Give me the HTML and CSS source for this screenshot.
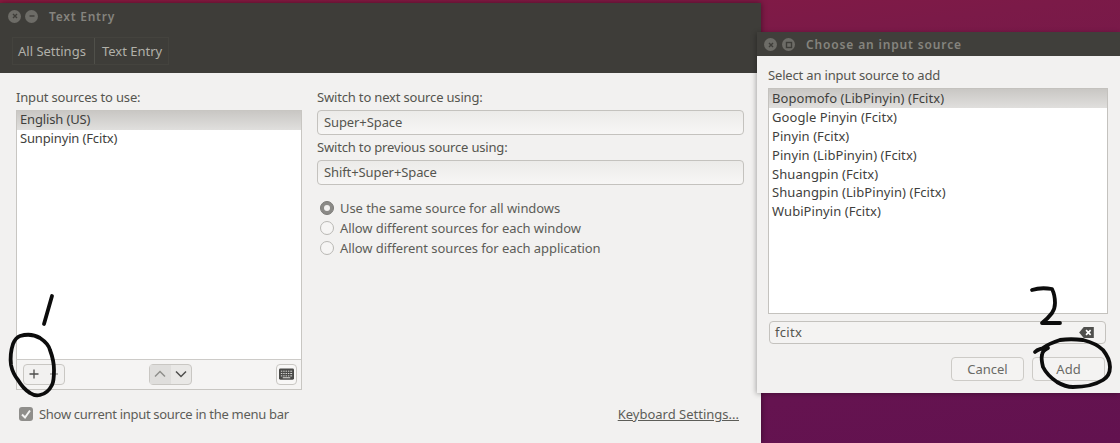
FILE: index.html
```html
<!DOCTYPE html>
<html lang="en">
<head>
<meta charset="utf-8">
<title>Text Entry</title>
<link rel="stylesheet" href="styles.css">
</head>
<body>
<div class="desktop">
  <section class="window main-window">
    <header class="titlebar">
      <span class="win-btn"><svg viewBox="0 0 12 12" class="win-glyph"><path d="M4 4l4 4M8 4l-4 4"/></svg></span>
      <span class="win-btn"><svg viewBox="0 0 12 12" class="win-glyph"><path d="M3.500 6h5"/></svg></span>
      <span class="title">Text Entry</span>
    </header>
    <nav class="toolbar">
      <div class="crumbs">
        <span class="crumb">All Settings</span>
        <span class="crumb">Text Entry</span>
      </div>
    </nav>
    <div class="content">
      <div class="columns">
        <div class="left-col">
          <div class="label">Input sources to use:</div>
          <div class="source-box">
            <ul class="list source-list">
              <li class="row selected">English (US)</li>
              <li class="row">Sunpinyin (Fcitx)</li>
            </ul>
            <div class="list-tools">
              <div class="btn-group add-group">
                <span class="tool-btn"><svg viewBox="0 0 12 12" class="tool-icon dark"><path d="M6 1.500v9M1.500 6h9"/></svg></span>
                <span class="tool-btn"><svg viewBox="0 0 12 12" class="tool-icon"><path d="M2 6h8"/></svg></span>
              </div>
              <div class="btn-group move-group">
                <span class="tool-btn muted"><svg viewBox="0 0 14 12" class="tool-icon wide"><path d="M2 8.500l5-5 5 5"/></svg></span>
                <span class="tool-btn"><svg viewBox="0 0 14 12" class="tool-icon wide dark"><path d="M2 3.500l5 5 5-5"/></svg></span>
              </div>
              <span class="kbd-btn">
                <svg viewBox="0 0 16 12" class="kbd-icon"><rect width="16" height="12" rx="1.500" fill="#4a4a48"/><path class="kbd-keys" d="M2 3h1.500M4.500 3H6M7 3h1.500M9.500 3H11M12 3h2M2 5.500h1.500M4.500 5.500H6M7 5.500h1.500M9.500 5.500H11M12 5.500h2M2 8h1.500M4.500 8H6M7 8h1.500M9.500 8H11M12 8h2M4 10h8"/></svg>
              </span>
            </div>
          </div>
        </div>
        <div class="right-col">
          <div class="label">Switch to next source using:</div>
          <div class="entry">Super+Space</div>
          <div class="label second-label">Switch to previous source using:</div>
          <div class="entry">Shift+Super+Space</div>
          <div class="radios">
            <label class="radio-row"><span class="radio checked"></span>Use the same source for all windows</label>
            <label class="radio-row"><span class="radio"></span>Allow different sources for each window</label>
            <label class="radio-row"><span class="radio"></span>Allow different sources for each application</label>
          </div>
        </div>
      </div>
      <div class="footer">
        <label class="check-row">
          <span class="checkbox"><svg viewBox="0 0 14 14" class="check-glyph"><path d="M3 7.500l3 3 5-7"/></svg></span>
          Show current input source in the menu bar
        </label>
        <span class="link">Keyboard Settings...</span>
      </div>
    </div>
  </section>

  <section class="window dialog">
    <header class="titlebar dialog-title">
      <span class="win-btn"><svg viewBox="0 0 12 12" class="win-glyph"><path d="M4 4l4 4M8 4l-4 4"/></svg></span>
      <span class="win-btn"><svg viewBox="0 0 12 12" class="win-glyph"><rect x="3.500" y="3.500" width="5" height="5" fill="none"/></svg></span>
      <span class="title bold">Choose an input source</span>
    </header>
    <div class="dialog-body">
      <div class="label">Select an input source to add</div>
      <ul class="list dialog-list">
        <li class="row selected">Bopomofo (LibPinyin) (Fcitx)</li>
        <li class="row">Google Pinyin (Fcitx)</li>
        <li class="row">Pinyin (Fcitx)</li>
        <li class="row">Pinyin (LibPinyin) (Fcitx)</li>
        <li class="row">Shuangpin (Fcitx)</li>
        <li class="row">Shuangpin (LibPinyin) (Fcitx)</li>
        <li class="row">WubiPinyin (Fcitx)</li>
      </ul>
      <div class="entry search">
        <span>fcitx</span>
        <svg viewBox="0 0 16 12" class="clear-icon"><path d="M5 0h11v12H5L0 6z" fill="#4f4f4d"/><path d="M7.500 3.500l5 5M12.500 3.500l-5 5" stroke="#fff" stroke-width="1.800"/></svg>
      </div>
      <div class="actions">
        <span class="button">Cancel</span>
        <span class="button">Add</span>
      </div>
    </div>
  </section>

  <svg class="ink" viewBox="0 0 1120 443">
    <path d="M52 296L44 324"/>
    <path d="M13 344C15 339 17 337 20 336C27 334 35 335 40 338C46 342 49 346 50 350C53 358 54 364 54 370C54 376 54 381 52 385C49 391 45 394 40 395C36 396 33 395 30 393C25 390 21 385 18 380C14 375 12 370 11 365C10 357 11 350 13 344"/>
    <path d="M1032 290C1038 288 1046 288 1052 289C1054 293 1055 298 1055 303C1055 307 1054 310 1052 313C1049 317 1046 320 1042 323C1048 323 1054 323 1060 323"/>
    <path d="M1035 352C1038 349 1043 348 1048 348C1044 350 1042 352 1042 355C1041 359 1042 363 1043 367C1046 373 1051 378 1057 382C1062 385 1067 387 1073 387C1085 387 1095 385 1103 380C1108 377 1110 372 1110 367C1110 361 1107 355 1103 350C1098 345 1091 342 1083 340C1075 339 1067 339 1060 340C1054 342 1048 344 1043 348"/>
  </svg>
</div>
</body>
</html>
```
FILE: styles.css
```css
* { box-sizing: border-box; }
html, body { margin: 0; padding: 0; }
body {
  width: 1120px;
  height: 443px;
  overflow: hidden;
  font-family: "Noto Sans", "Open Sans", sans-serif;
  font-size: 13px;
  color: #4c4c4a;
}
.desktop {
  position: relative;
  width: 1120px;
  height: 443px;
  overflow: hidden;
  background: linear-gradient(172deg, #8c1a41 0%, #7b1a48 25%, #651350 85%, #62124f 100%);
}
.window { position: absolute; display: flex; flex-direction: column; }
.main-window {
  left: 0; top: 3px; width: 761px; height: 440px;
  background: #f2f1f0;
  box-shadow: 0 0 6px rgba(0,0,0,.45);
}
.dialog {
  left: 757px; top: 32px; width: 363px; height: 361px;
  background: #f2f1f0;
  box-shadow: -1px 1px 5px rgba(0,0,0,.3);
}
.titlebar {
  height: 25px;
  background: #3e3d39;
  display: flex;
  align-items: center;
  padding: 1px 0 0 8px;
  gap: 4px;
  flex: none;
}
.dialog-title { height: 24px; padding-left: 7px; background: #403f3b; gap: 5px; }
.win-btn {
  width: 13px; height: 13px; border-radius: 50%;
  background: #6d6c67;
  display: flex; align-items: center; justify-content: center;
}
.win-glyph { width: 12px; height: 12px; fill: none; stroke: #3e3d39; stroke-width: 1.400; }
.title {
  margin-left: 7px;
  color: #85847e;
  font-size: 12px;
  font-weight: 600;
  letter-spacing: .75px;
}
.title.bold { margin-left: 6px; letter-spacing: .85px; }
.toolbar {
  height: 45px;
  flex: none;
  background: #3e3d39;
  padding: 9px 0 0 12px;
}
.crumbs { display: flex; height: 28px; width: 157px; border: 1px solid #44433e; }
.crumb {
  display: flex; align-items: center;
  color: #b1b0a9;
  font-size: 13px;
  padding: 0 8px 0 5px;
  white-space: nowrap;
}
.crumb + .crumb { border-left: 1px solid #50504a; padding: 0 7px; }
.content {
  flex: 1;
  background: #f2f1f0;
  display: flex;
  flex-direction: column;
  padding: 14px 17px 0 16px;
}
.columns { display: flex; gap: 15px; flex: none; height: 303px; }
.left-col { width: 286px; flex: none; }
.right-col { flex: 1; }
.label { height: 20px; line-height: 20px; color: #55554f; font-size: 13px; letter-spacing: -.17px; }
.second-label { margin-top: 2px; height: 20px; line-height: 20px; }
.source-box { border: 1px solid #c8c6c2; background: #f5f4f3; margin-top: 3px; height: 280px; }
.list { list-style: none; margin: 0; padding: 0; background: #fff; }
.source-list { height: 249px; border-bottom: 1px solid #cdcbc8; letter-spacing: -.15px; }
.source-list .row { line-height: 17px; }
.dialog-list { letter-spacing: .07px; }
.row {
  height: 18.9px; line-height: 18px;
  padding-left: 3px;
  color: #3f3f3d;
  font-size: 13px;
  white-space: nowrap;
}
.row.selected { background: linear-gradient(180deg, #c9c7c4, #e0dfdd); }
.list-tools {
  height: 29px;
  display: flex;
  align-items: center;
  padding: 0 4px 0 6px;
  justify-content: space-between;
}
.btn-group { display: flex; border: 1px solid #c9c7c3; border-radius: 4px; height: 21px; }
.add-group { width: 42px; background: #f2f1f0; margin-top: -1px; }
.move-group { width: 43px; background: #e9e8e6; margin-top: -1px; }
.tool-btn { flex: 1; display: flex; align-items: center; justify-content: center; }
.tool-btn.muted { background: #dfdedc; }
.tool-icon { width: 12px; height: 12px; fill: none; stroke: #8f8f8b; stroke-width: 1.300; }
.tool-icon.wide { width: 14px; height: 12px; stroke-width: 1.500; }
.tool-icon.dark { stroke: #4e4e4c; }
.kbd-btn {
  width: 21px; height: 21px; margin-top: -1px;
  border: 1px solid #c9c7c3; border-radius: 4px; background: #f8f7f6;
  display: flex; align-items: center; justify-content: center;
}
.kbd-icon { width: 15px; height: 12px; }
.kbd-keys { fill: none; stroke: #e6e6e4; stroke-width: 1; }
.entry {
  height: 25px; margin-top: 3px;
  border: 1px solid #c4c2be; border-radius: 4px;
  background: linear-gradient(180deg, #ecebe9, #f7f6f5);
  padding-left: 6px;
  line-height: 23px;
  color: #55554f;
  font-size: 13px;
  letter-spacing: -.1px;
}
.radios { margin-top: 13px; display: flex; flex-direction: column; }
.radio-row { height: 20px; display: flex; align-items: center; gap: 6px; padding-left: 3px; color: #5d5d58; letter-spacing: -.07px; white-space: nowrap; }
.radio {
  width: 14px; height: 14px; border-radius: 50%;
  border: 1px solid #b9b8b4; background: #f6f5f4; flex: none;
  display: flex; align-items: center; justify-content: center;
}
.radio.checked { background: #8b8a87; border-color: #7b7a77; }
.radio.checked::after { content: ""; width: 6px; height: 6px; border-radius: 50%; background: #f2f1f0; }
.footer {
  display: flex; align-items: center; justify-content: space-between;
  margin-top: 14px;
  height: 20px;
}
.check-row { display: flex; align-items: center; gap: 6px; padding-left: 3px; color: #5d5d58; letter-spacing: -.3px; white-space: nowrap; }
.checkbox {
  width: 14px; height: 14px; border-radius: 3px;
  background: #8f8e8b; display: flex; align-items: center; justify-content: center;
}
.check-glyph { width: 14px; height: 14px; fill: none; stroke: #f3f3f2; stroke-width: 2; }
.link { color: #5d5d58; text-decoration: underline; margin-right: 5px; }
.dialog-body {
  flex: 1;
  display: flex;
  flex-direction: column;
  padding: 9px 12px 0 11px;
}
.dialog-list {
  height: 226px;
  margin-top: 3px;
  border: 1px solid #c4c2be;
}
.search {
  margin: 7px 2px 0 1px;
  height: 23px;
  display: flex;
  align-items: center;
  justify-content: space-between;
  line-height: 21px;
  padding: 0 11px 0 5px;
  background: #f4f3f2;
  letter-spacing: .3px;
}
.clear-icon { width: 15px; height: 11px; }
.actions { display: flex; justify-content: flex-end; gap: 8px; margin-top: 13px; padding-right: 3px; }
.button {
  width: 73px; height: 24px;
  border: 1px solid #cdcbc7; border-radius: 4px;
  background: #f4f3f2;
  display: flex; align-items: center; justify-content: center;
  color: #6a6a66;
}
.ink {
  position: absolute; left: 0; top: 0; width: 1120px; height: 443px;
  fill: none; stroke: #0c0c0c; stroke-width: 3.800; stroke-linecap: round; stroke-linejoin: round;
  pointer-events: none;
}
```
